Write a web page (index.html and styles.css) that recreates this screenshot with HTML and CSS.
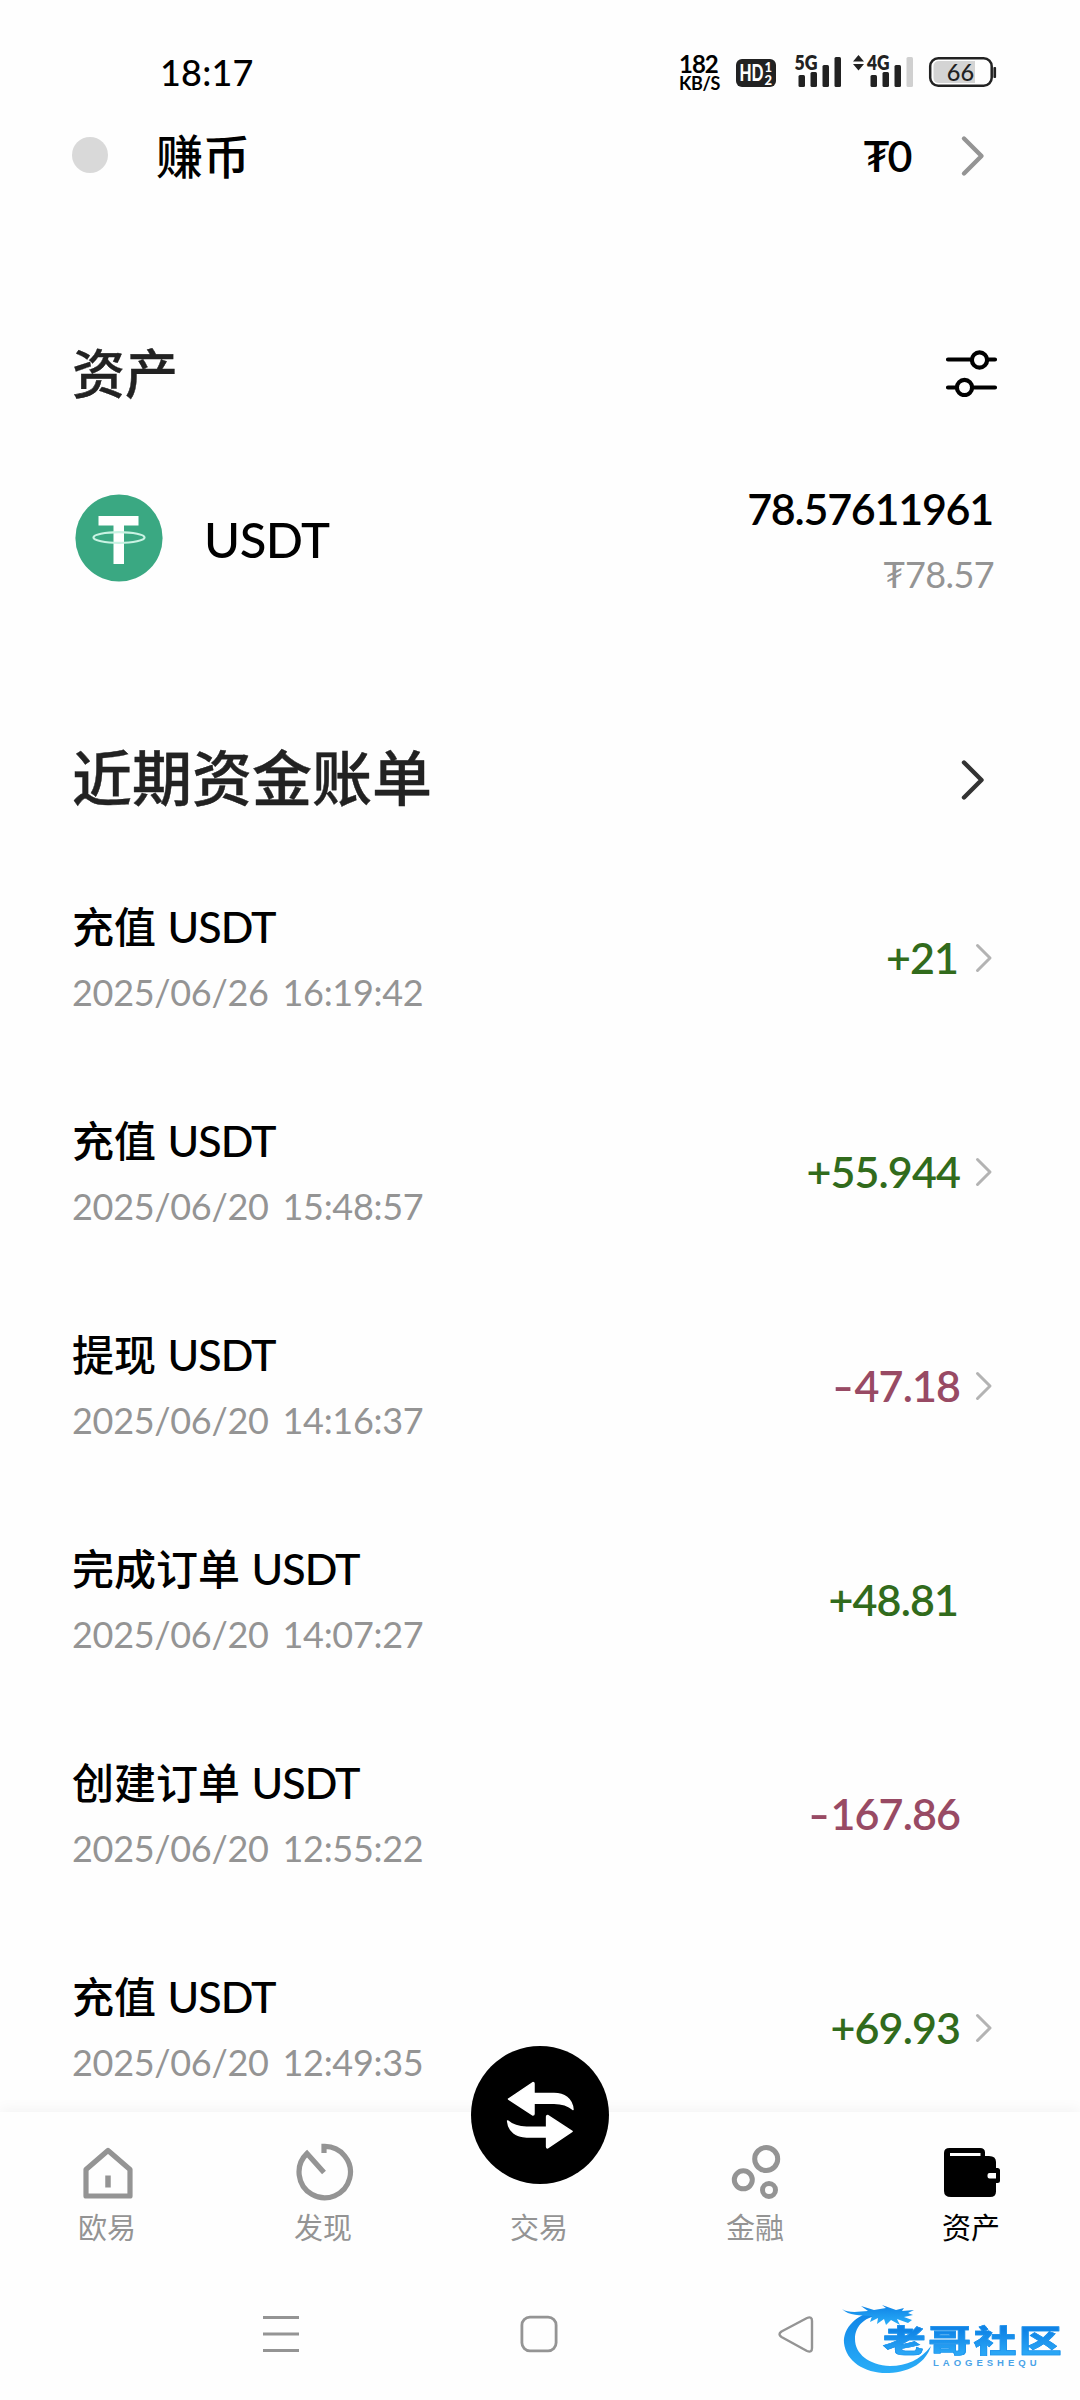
FILE: index.html
```html
<!DOCTYPE html>
<html lang="zh-CN">
<head>
<meta charset="utf-8">
<meta name="viewport" content="width=device-width">
<title>资产</title>
<link rel="stylesheet" href="styles.css">
</head>
<body>
<div class="screen">
  <header class="status">
    <span class="clock">18:17</span>
    <div class="indicators">
      <div class="speed"><span class="speed-value">182</span><span class="speed-unit">KB/S</span></div>
      <svg class="status-icons" width="262" height="44" viewBox="736 51 262 44">
        <rect x="736" y="59" width="40" height="28" rx="6" fill="#222"/>
        <g fill="#fff" font-weight="900">
          <text x="739.5" y="80.500" font-size="22" textLength="24" lengthAdjust="spacingAndGlyphs">HD</text>
          <text x="764.500" y="72" font-size="13">1</text>
          <text x="764.500" y="84.500" font-size="13">2</text>
        </g>
        <g fill="#222">
          <text x="794.500" y="70" font-size="20.500" font-weight="800" textLength="23" lengthAdjust="spacingAndGlyphs">5G</text>
          <rect x="798.500" y="75" width="6.500" height="12" rx="1.500"/>
          <rect x="810.500" y="72" width="6.500" height="15" rx="1.500"/>
          <rect x="822.500" y="65" width="6.500" height="22" rx="1.500"/>
          <rect x="834.500" y="57" width="6.500" height="30" rx="1.500"/>
          <path d="M853 61.500L858.500 55l5.500 6.500zM853 64l5.500 6.500L864 64z"/>
          <text x="867" y="70" font-size="20.500" font-weight="800" textLength="22.500" lengthAdjust="spacingAndGlyphs">4G</text>
          <rect x="870.500" y="75" width="6.500" height="12" rx="1.500"/>
          <rect x="882.500" y="72" width="6.500" height="15" rx="1.500"/>
          <rect x="894.500" y="65" width="6.500" height="22" rx="1.500"/>
          <rect x="906.500" y="57" width="6.500" height="30" rx="1.500" fill="#d0d0d0"/>
        </g>
        <path d="M939 61h36v22h-36q-5.500 0-5.500-5.500v-11q0-5.500 5.500-5.500z" fill="#d4d4d4"/>
        <rect x="930.200" y="58.200" width="61.500" height="27.600" rx="8" fill="none" stroke="#222" stroke-width="2.500"/>
        <rect x="993.400" y="67" width="2.700" height="11" rx="1" fill="#222"/>
        <text x="960.500" y="81" font-size="23.500" font-weight="500" text-anchor="middle" fill="#222">66</text>
      </svg>
    </div>
  </header>

  <main class="content">
    <section class="earn">
      <span class="dot"></span>
      <span class="earn-name">赚币</span>
      <span class="earn-value">₮0</span>
      <svg class="chevron" width="26" height="42" viewBox="0 0 26 42"><path d="M4 3.500L21.500 21 4 38.500" stroke="#949494"/></svg>
    </section>

    <section class="head assets-head">
      <h2>资产</h2>
      <svg width="54" height="50" viewBox="0 0 54 50" fill="none" stroke="#000" stroke-width="4.200" stroke-linecap="round">
        <path d="M3 12.500h23M43 12.500h7M3 40.500h8M28.500 40.500H50"/>
        <circle cx="34.500" cy="13" r="7.600"/><circle cx="19.500" cy="40.500" r="7.600"/>
      </svg>
    </section>

    <section class="asset">
      <svg width="88" height="88" viewBox="0 0 88 88">
        <circle cx="44" cy="44" r="43.600" fill="#3aa882"/>
        <path d="M23.500 22h40v9.500H49V70H38.500V31.500h-15z" fill="#fff"/>
        <ellipse cx="44" cy="43.500" rx="25.500" ry="5.300" fill="none" stroke="#c9f3e3" stroke-width="2.200"/>
      </svg>
      <span class="asset-name">USDT</span>
      <div class="asset-values"><span class="asset-amount">78.57611961</span><span class="asset-fiat">₮78.57</span></div>
    </section>

    <section class="head bills-head">
      <h2>近期资金账单</h2>
      <svg class="chevron" width="26" height="42" viewBox="0 0 26 42"><path d="M4 3.500L21.500 21 4 38.500" stroke="#333"/></svg>
    </section>

    <ul class="bills">
      <li class="bill"><div><p class="bill-name">充值 <span>USDT</span></p><time>2025/06/26 16:19:42</time></div><span class="amount up ends-in-one">+21</span><svg class="go" width="18" height="30" viewBox="0 0 18 30"><path d="M2.500 2.500L15 15 2.500 27.500"/></svg></li>
      <li class="bill"><div><p class="bill-name">充值 <span>USDT</span></p><time>2025/06/20 15:48:57</time></div><span class="amount up">+55.944</span><svg class="go" width="18" height="30" viewBox="0 0 18 30"><path d="M2.500 2.500L15 15 2.500 27.500"/></svg></li>
      <li class="bill"><div><p class="bill-name">提现 <span>USDT</span></p><time>2025/06/20 14:16:37</time></div><span class="amount down"><span class="minus">-</span>47.18</span><svg class="go" width="18" height="30" viewBox="0 0 18 30"><path d="M2.500 2.500L15 15 2.500 27.500"/></svg></li>
      <li class="bill"><div><p class="bill-name">完成订单 <span>USDT</span></p><time>2025/06/20 14:07:27</time></div><span class="amount up ends-in-one">+48.81</span><span class="go"></span></li>
      <li class="bill"><div><p class="bill-name">创建订单 <span>USDT</span></p><time>2025/06/20 12:55:22</time></div><span class="amount down"><span class="minus">-</span>167.86</span><span class="go"></span></li>
      <li class="bill"><div><p class="bill-name">充值 <span>USDT</span></p><time>2025/06/20 12:49:35</time></div><span class="amount up">+69.93</span><svg class="go" width="18" height="30" viewBox="0 0 18 30"><path d="M2.500 2.500L15 15 2.500 27.500"/></svg></li>
    </ul>
  </main>

  <nav class="tabs">
    <a class="tab">
      <svg width="60" height="60" viewBox="0 0 60 60" fill="none" stroke="#949494" stroke-width="5.200"><path d="M8 21.500L30 2.500l22 19v26.500H8z" transform="translate(0 6)" stroke-linejoin="round"/><path d="M30 33.500v12" stroke-width="5.500"/></svg>
      <span>欧易</span>
    </a>
    <a class="tab">
      <svg width="60" height="60" viewBox="0 0 60 60" fill="none" stroke="#949494" stroke-width="5.200"><path d="M30 11V4.400A25.700 25.700 0 1 1 13 11.500L30 30.500"/></svg>
      <span>发现</span>
    </a>
    <a class="tab">
      <span class="trade">
        <svg width="138" height="138" viewBox="0 0 138 138" fill="#fff" stroke="#fff" stroke-width="1.500" stroke-linejoin="round">
          <path d="M37.500 53L62 36.500q1 0 1 1V47.500h20c10 0 18 5 19 16q-7-6.300-19-6.300H63V68q0 1-1 1z"/>
          <path d="M37.500 53L62 36.500q1 0 1 1V47.500h20c10 0 18 5 19 16q-7-6.300-19-6.300H63V68q0 1-1 1z" transform="rotate(180 69.300 69.200)"/>
        </svg>
      </span>
      <span>交易</span>
    </a>
    <a class="tab">
      <svg width="60" height="60" viewBox="0 0 60 60" fill="none" stroke="#949494" stroke-width="5"><circle cx="40.200" cy="17" r="11.500"/><circle cx="17.300" cy="37.800" r="9"/><circle cx="43" cy="48" r="6.500"/></svg>
      <span>金融</span>
    </a>
    <a class="tab active">
      <svg width="60" height="60" viewBox="0 0 60 60"><path fill-rule="evenodd" d="M7.500 6H38q5 0 5 4.500V14h4q7 0 7 6v6h1.500q2.500 0 2.500 2.500v10q0 2.500-2.500 2.500H54v8.500q0 5.500-6 5.500H9q-7 0-7-6V11q0-5 5.500-5zM8 11v3h30.500v-3zM47.500 31q-2 0-2 2v1.500q0 2 2 2H54V31z"/></svg>
      <span>资产</span>
    </a>
  </nav>

  <footer class="system">
    <svg width="40" height="40" viewBox="0 0 40 40" fill="none" stroke="#949494" stroke-width="3"><path d="M2 3.500h36M2 20h36M2 36.500h36"/></svg>
    <svg width="40" height="40" viewBox="0 0 40 40" fill="none" stroke="#949494" stroke-width="2.800"><rect x="2.900" y="3.200" width="34.200" height="33.600" rx="8"/></svg>
    <svg width="40" height="40" viewBox="0 0 40 40" fill="none" stroke="#949494" stroke-width="2.400" stroke-linejoin="round"><path d="M4.500 17.500L30 4q5-2 5 3v27q0 5-5 3L4.500 23q-4-2.700 0-5.500z"/></svg>
    <div class="watermark">
      <svg width="96" height="76" viewBox="838 2302 96 76">
        <defs><linearGradient id="ring" x1="0" y1="0" x2="0" y2="1"><stop offset="0" stop-color="#0f83e6"/><stop offset="1" stop-color="#2aaef8"/></linearGradient></defs>
        <g fill="url(#ring)">
          <path d="M878 2310C856 2314 843 2328 844 2343C846 2362 866 2374 889 2373C911 2372 926 2362 931 2346C920 2360 907 2366 890 2366C869 2365 855 2354 855 2339C855 2325 866 2316 882 2315z"/>
          <path d="M842 2309C848 2313 857 2312 868 2311L861 2306L874 2310L886 2308L882 2305L896 2310L904 2308L902 2311L914 2310L908 2313L913 2315L904 2317L912 2320L908 2323L897 2319L900 2325L891 2320L886 2325L884 2319L877 2324L878 2318L870 2322L872 2316C860 2315 849 2316 842 2309z"/>
        </g>
      </svg>
      <div class="wordmark"><b>老哥社区</b><small>LAOGESHEQU</small></div>
    </div>
  </footer>
</div>
</body>
</html>
```
FILE: styles.css
```css
* { box-sizing: border-box; }
body { margin: 0; background: #fefefe; }
h2, p, ul { margin: 0; padding: 0; }
ul { list-style: none; }
svg { display: block; flex: none; }

.screen {
  width: 1080px;
  height: 2400px;
  display: flex;
  flex-direction: column;
  overflow: hidden;
  position: relative;
  font-family: Lato, "Noto Sans CJK SC", sans-serif;
  font-weight: 500;
  color: #000;
}

.status {
  height: 105px;
  padding: 41px 82px 0 160px;
  display: flex;
  justify-content: space-between;
}
.clock { font-size: 36px; line-height: 62px; letter-spacing: 0.2px; }
.indicators { display: flex; gap: 17px; padding-top: 10px; }
.speed { display: flex; flex-direction: column; width: 40px; padding-top: 2px; }
.speed-value { font-size: 24px; line-height: 21px; font-weight: 700; letter-spacing: -1px; }
.speed-unit { font-size: 18px; line-height: 19px; font-weight: 700; letter-spacing: -0.4px; }

.content { height: 2007px; overflow: hidden; padding: 0 88px 0 72px; }

.earn { height: 102px; display: flex; align-items: center; }
.dot { width: 36px; height: 36px; border-radius: 50%; background: #d9d9d9; margin-top: -2px; }
.earn-name { margin-left: 48px; font-size: 47px; line-height: 60px; margin-top: -1px; }
.earn-value { margin-left: auto; margin-right: 50px; font-size: 43px; line-height: 60px; letter-spacing: -2.5px; font-weight: 600; }
.chevron { fill: none; stroke-width: 4.4; stroke-linecap: round; stroke-linejoin: round; }
.earn .chevron { margin-right: 6px; }

.head { height: 100px; display: flex; align-items: center; justify-content: space-between; color: #222; }
.head h2 { font-weight: 500; line-height: 80px; -webkit-text-stroke: 0.4px #222; }
.assets-head { margin-top: 117px; }
.assets-head h2 { font-size: 53px; }
.assets-head svg { margin: -5px -7px 0 0; }
.bills-head { margin-top: 76px; }
.bills-head h2 { font-size: 60px; }
.bills-head .chevron { margin: 3px 6px 0 0; }

.asset { height: 228px; display: flex; align-items: center; padding-left: 3px; }
.asset-name { margin: 2px 0 0 41px; font-size: 49px; line-height: 60px; letter-spacing: -0.5px; }
.asset-values { margin-left: auto; display: flex; flex-direction: column; align-items: flex-end; gap: 10px; padding-top: 2px; }
.asset-amount { font-size: 43px; line-height: 60px; letter-spacing: -1.25px; font-weight: 600; margin-right: -1px; }
.asset-fiat { font-size: 36px; line-height: 50px; font-weight: 400; letter-spacing: -0.6px; color: #949494; margin-right: -2px; }

.bills { margin-top: 23px; }
.bill { height: 214px; display: flex; align-items: center; }
.bill > div { margin-top: -6px; }
.bill-name { font-size: 42px; line-height: 60px; }
.bill-name span { font-size: 43px; letter-spacing: -1px; margin-left: 1px; }
.bill time { display: block; margin-top: 13px; font-size: 36px; line-height: 44px; font-weight: 400; color: #949494; letter-spacing: -0.3px; word-spacing: 5px; }
.amount { margin-left: auto; font-size: 43px; line-height: 60px; font-weight: 600; letter-spacing: -0.9px; }
.amount.ends-in-one { padding-right: 2px; }
.minus { display: inline-block; transform: scaleX(1.35); margin-right: 4px; }
.up { color: #316b1c; }
.down { color: #984a64; }
.go { width: 18px; height: 30px; margin: 0 -1px 0 15px; fill: none; stroke: #b3b3b3; stroke-width: 3; stroke-linecap: round; stroke-linejoin: round; }

.tabs {
  height: 158px;
  display: grid;
  grid-template-columns: repeat(5, 1fr);
  background: #fefefe;
  box-shadow: 0 -2px 14px rgba(0, 0, 0, 0.05);
  position: relative;
}
.tab { display: flex; flex-direction: column; align-items: center; padding-top: 30px; position: relative; font-size: 29px; line-height: 40px; font-weight: 400; color: #949494; }
.tab > svg { margin-left: -1px; }
.tab > span:last-child { margin: auto 2px 22px 0; }
.tab.active { color: #000; }
.trade { position: absolute; left: 39px; top: -66px; width: 138px; height: 138px; border-radius: 50%; background: #000; }

.system {
  height: 130px;
  display: grid;
  grid-template-columns: 258px 258px 40px;
  padding: 44px 261px 0;
  position: relative;
  background: #fefefe;
}
.watermark { position: absolute; left: 838px; top: 32px; display: flex; }
.wordmark { width: 190px; margin-left: -51px; padding-top: 21px; }
.wordmark b {
  display: block;
  width: 138px;
  font-size: 31px;
  line-height: 35px;
  font-weight: 900;
  letter-spacing: 2px;
  white-space: nowrap;
  transform: scaleX(1.375);
  transform-origin: 0 50%;
  color: transparent;
  -webkit-text-stroke: 0.6px #1c92ec;
  background: linear-gradient(#0f83e6 20%, #2aa6f5 85%);
  -webkit-background-clip: text;
  background-clip: text;
}
.wordmark small { display: block; margin-left: 50px; font: 700 9.5px/10px "Liberation Sans", sans-serif; letter-spacing: 4px; color: #4aa3e8; }
```
